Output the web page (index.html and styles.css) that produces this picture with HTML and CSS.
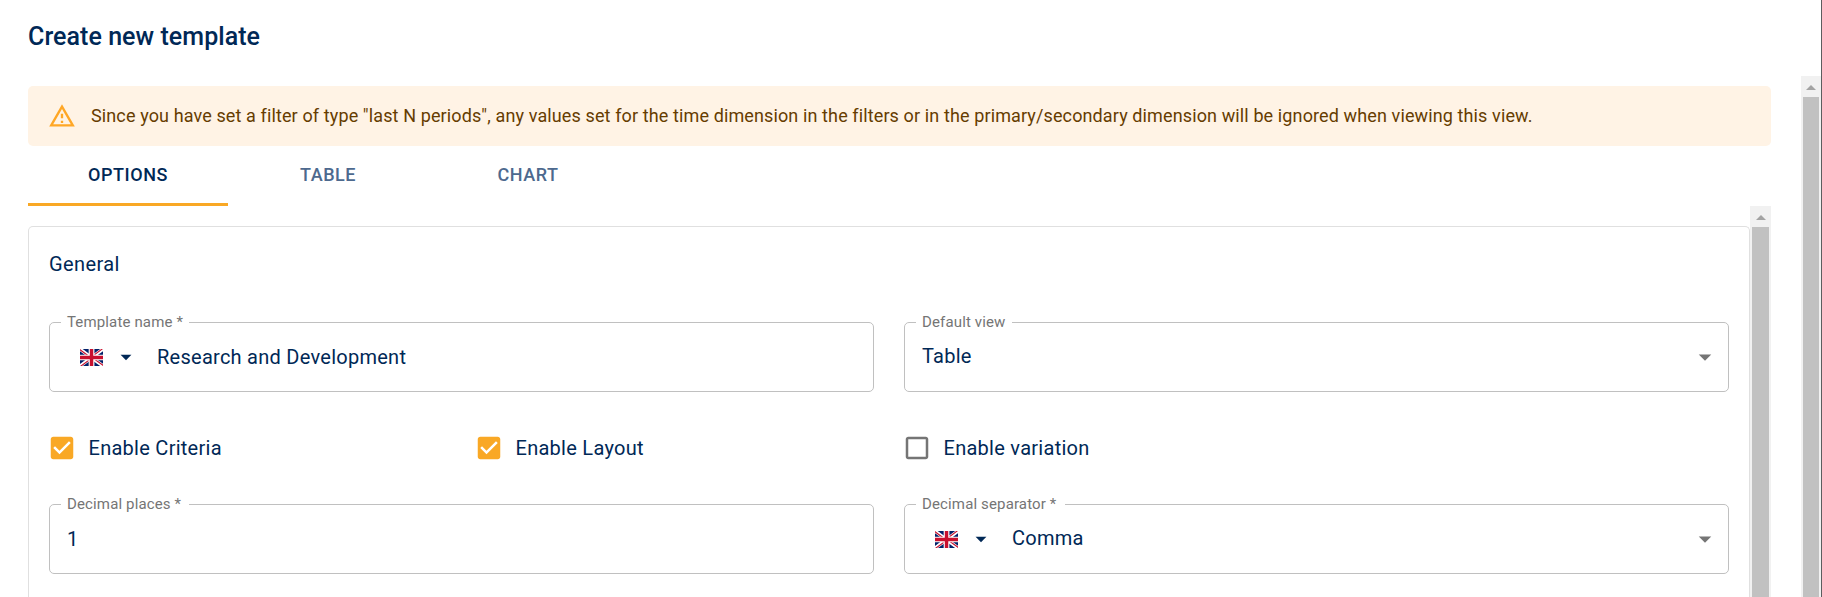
FILE: index.html
```html
<!DOCTYPE html>
<html lang="en">
<head>
<meta charset="utf-8">
<title>Create new template</title>
<link rel="stylesheet" href="styles.css">
</head>
<body>
<svg class="defs" width="0" height="0" aria-hidden="true">
  <symbol id="flag" viewBox="0 0 640 480" preserveAspectRatio="none">
    <path fill="#012169" d="M0 0h640v480H0z"/>
    <path fill="#fff" d="m75 0 244 181L562 0h78v62L400 241l240 178v61h-80L320 301 81 480H0v-60l239-178L0 64V0z"/>
    <path fill="#c8102e" d="m424 281 216 159v40L369 281zm-184 20 6 35L54 480H0zM640 0v3L391 191l2-44L590 0zM0 0l239 176h-60L0 42z"/>
    <path fill="#fff" d="M241 0v480h160V0zM0 160v160h640V160z"/>
    <path fill="#c8102e" d="M0 193v96h640v-96zM273 0v480h96V0z"/>
  </symbol>
  <symbol id="checked" viewBox="0 0 24 24"><path d="M19 3H5c-1.11 0-2 .9-2 2v14c0 1.1.89 2 2 2h14c1.11 0 2-.9 2-2V5c0-1.1-.89-2-2-2zm-9 14l-5-5 1.41-1.41L10 14.17l7.59-7.59L19 8l-9 9z"/></symbol>
  <symbol id="unchecked" viewBox="0 0 24 24"><path d="M19 5v14H5V5h14m0-2H5c-1.1 0-2 .9-2 2v14c0 1.1.9 2 2 2h14c1.1 0 2-.9 2-2V5c0-1.1-.9-2-2-2z"/></symbol>
  <symbol id="arrow" viewBox="0 0 24 24"><path d="M7 10l5 5 5-5z"/></symbol>
</svg>
<div class="dialog">
  <header class="title"><span>Create new template</span></header>
  <div class="body">
    <main class="content">
      <div class="alert">
        <svg class="warn" viewBox="0 0 24 24"><path d="M12 5.99L19.53 19H4.47L12 5.99M12 2L1 21h22L12 2zm1 14h-2v2h2v-2zm0-6h-2v4h2v-4z"/></svg>
        <span>Since you have set a filter of type "last N periods", any values set for the time dimension in the filters or in the primary/secondary dimension will be ignored when viewing this view.</span>
      </div>
      <nav class="tabs">
        <div class="tab active"><span>OPTIONS</span></div>
        <div class="tab"><span>TABLE</span></div>
        <div class="tab"><span>CHART</span></div>
      </nav>
      <div class="scroller">
        <section class="panel">
          <h2 class="heading"><span>General</span></h2>
          <div class="row">
            <fieldset class="field"><legend><span>Template name *</span></legend>
              <div class="value lang"><svg class="flag"><use href="#flag"/></svg><svg class="small-arrow"><use href="#arrow"/></svg><span>Research and Development</span></div>
            </fieldset>
            <fieldset class="field"><legend class="l-view"><span>Default view</span></legend>
              <div class="value raised"><span>Table</span><svg class="arrow"><use href="#arrow"/></svg></div>
            </fieldset>
          </div>
          <div class="checks">
            <label class="check"><svg class="box on"><use href="#checked"/></svg><span>Enable Criteria</span></label>
            <label class="check"><svg class="box on"><use href="#checked"/></svg><span>Enable Layout</span></label>
            <label class="check"><svg class="box"><use href="#unchecked"/></svg><span>Enable variation</span></label>
          </div>
          <div class="row">
            <fieldset class="field"><legend><span>Decimal places *</span></legend>
              <div class="value"><span>1</span></div>
            </fieldset>
            <fieldset class="field"><legend class="l-sep"><span>Decimal separator *</span></legend>
              <div class="value lang raised"><svg class="flag"><use href="#flag"/></svg><svg class="small-arrow"><use href="#arrow"/></svg><span>Comma</span><svg class="arrow"><use href="#arrow"/></svg></div>
            </fieldset>
          </div>
        </section>
        <div class="bar inner"><i class="up"></i><i class="thumb"></i></div>
      </div>
    </main>
    <div class="bar outer"><i class="up"></i><i class="thumb"></i></div>
  </div>
</div>
</body>
</html>
```
FILE: styles.css
```css
* { box-sizing: border-box; }
body { margin: 0; background: #fff; font-family: Roboto, sans-serif; color: #002856; overflow: hidden; }
svg { display: block; flex: none; fill: currentColor; }
.defs { position: absolute; }
span { white-space: nowrap; }
.dialog { height: 597px; display: flex; flex-direction: column; border-right: 1px solid #5c5d5f; overflow: hidden; }
.title { flex: none; height: 76px; padding: 21px 28px; font-size: 25px; line-height: 32px; font-weight: 500; letter-spacing: 0.06px; }
.body { flex: 1; min-height: 0; display: flex; }
.content { flex: 1; min-width: 0; padding: 10px 30px 0 28px; display: flex; flex-direction: column; }
.alert { flex: none; height: 60px; border-radius: 5px; background: #fff3e5; color: #663c00; display: flex; align-items: center; padding-left: 20px; gap: 15px; font-size: 18px; letter-spacing: 0.118px; }
.alert span { padding-bottom: 2px; }
.warn { width: 28px; height: 28px; color: #ffa726; }
.tabs { flex: none; height: 60px; display: flex; }
.tab { width: 200px; display: flex; justify-content: center; padding-top: 16px; line-height: 26px; font-size: 18px; font-weight: 500; letter-spacing: 0.55px; color: #4d698e; border-bottom: 3px solid transparent; }
.tab.active { color: #002856; border-color: #f9a825; }
.scroller { flex: 1; min-height: 0; display: flex; }
.panel { flex: 1; min-width: 0; margin-top: 20px; border: 1px solid #e0e0e0; border-bottom: 0; border-radius: 5px 5px 0 0; padding: 0 20px; }
.heading { margin: 0; padding-top: 21px; height: 85px; font-size: 20px; line-height: 32px; font-weight: 400; letter-spacing: 0.4px; }
.row { display: grid; grid-template-columns: 1fr 1fr; gap: 30px; }
.field { margin: 0; min-width: 0; height: 80px; border: 1px solid #c0c0c0; border-radius: 5px; padding: 0 8px 0 17px; }
.field legend { height: 20px; margin-left: -6px; padding: 0 6px; line-height: 20px; font-size: 15px; letter-spacing: 0.14px; color: #757575; width: 128px; }
.field .l-view { width: 96px; }
.field .l-sep { width: 149px; }
.value { height: 50px; display: flex; align-items: center; font-size: 20px; letter-spacing: 0.26px; }
.value.raised span { padding-bottom: 2px; }
.lang { padding-left: 13px; }
.flag { width: 23px; height: 17px; }
.small-arrow { width: 26px; height: 26px; margin-left: 9.5px; margin-right: 18.5px; }
.arrow { width: 30px; height: 30px; margin-left: auto; color: #757575; }
.checks { display: grid; grid-template-columns: 427px 428px 1fr; height: 102px; padding-top: 41px; }
.check { display: flex; align-items: center; height: 30px; gap: 11.5px; margin-left: -2px; font-size: 20px; letter-spacing: 0.27px; }
.box { width: 30px; height: 30px; color: #757575; }
.box.on { color: #f9a825; }
.bar { flex: none; background: #f1f1f1; display: flex; flex-direction: column; align-items: center; }
.inner { width: 21px; }
.outer { width: 20px; }
.up { height: 21px; display: flex; align-items: center; }
.up::before { content: ""; margin-top: 2px; border: 5px solid transparent; border-top: 0; border-bottom-color: #a3a3a3; }
.thumb { flex: 1; width: 17px; background: #c1c1c1; }
.outer .thumb { width: 16px; }
```
